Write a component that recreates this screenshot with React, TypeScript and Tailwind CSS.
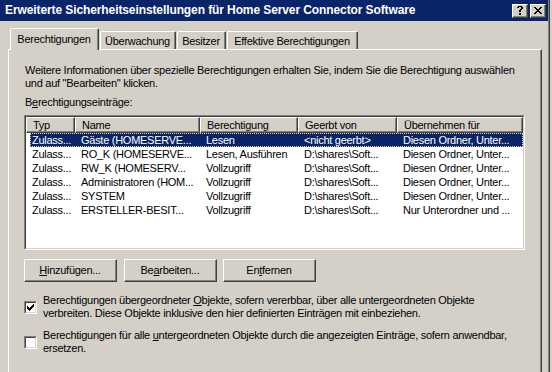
import React from "react";

const CHECK = [
  "......#",
  ".....##",
  "#...###",
  "##.###.",
  "#####..",
  ".###...",
  "..#....",
];
const CLOSE = [
  "##....##",
  ".##..##.",
  "..####..",
  "...##...",
  "..####..",
  ".##..##.",
  "##....##",
];
const QUESTION = [
  ".####.",
  "##..##",
  "....##",
  "...##.",
  "..##..",
  "..##..",
  "......",
  "..##..",
  "..##..",
];

function Pixels({ rows }: { rows: string[] }) {
  const w = rows[0].length;
  const h = rows.length;
  return (
    <svg width={w} height={h} viewBox={`0 0 ${w} ${h}`} shapeRendering="crispEdges" className="block">
      {rows.flatMap((r, y) =>
        r.split("").map((c, x) =>
          c === "#" ? <rect key={`${x}-${y}`} x={x} y={y} width={1} height={1} fill="#000" /> : null
        )
      )}
    </svg>
  );
}

function Raised({ className = "", innerClassName = "", children }: { className?: string; innerClassName?: string; children?: React.ReactNode }) {
  return (
    <div className={`border-t border-l border-t-white border-l-white border-r border-b border-r-[#404040] border-b-[#404040] ${className}`}>
      <div className={`h-full w-full border-r border-b border-r-[#808080] border-b-[#808080] ${innerClassName}`}>{children}</div>
    </div>
  );
}

function U({ children }: { children: React.ReactNode }) {
  return <span className="underline underline-offset-[1px]">{children}</span>;
}

function CheckBox({ checked }: { checked: boolean }) {
  return (
    <div className="w-[13px] h-[13px] shrink-0 border-t border-l border-t-[#808080] border-l-[#808080] border-b border-r border-b-white border-r-white">
      <div className="w-full h-full bg-white border-t border-l border-t-[#404040] border-l-[#404040] border-b border-r border-b-[#d4d0c8] border-r-[#d4d0c8] flex items-center justify-center">
        {checked && <Pixels rows={CHECK} />}
      </div>
    </div>
  );
}

const rows = [
  ["Zulass...", "Gäste (HOMESERVE...", "Lesen", "<nicht geerbt>", "Diesen Ordner, Unter..."],
  ["Zulass...", "RO_K (HOMESERVE...", "Lesen, Ausführen", "D:\\shares\\Soft...", "Diesen Ordner, Unter..."],
  ["Zulass...", "RW_K (HOMESERV...", "Vollzugriff", "D:\\shares\\Soft...", "Diesen Ordner, Unter..."],
  ["Zulass...", "Administratoren (HOM...", "Vollzugriff", "D:\\shares\\Soft...", "Diesen Ordner, Unter..."],
  ["Zulass...", "SYSTEM", "Vollzugriff", "D:\\shares\\Soft...", "Diesen Ordner, Unter..."],
  ["Zulass...", "ERSTELLER-BESIT...", "Vollzugriff", "D:\\shares\\Soft...", "Nur Unterordner und ..."],
];

const headers: [string, string][] = [
  ["Typ", "w-[49px]"],
  ["Name", "w-[125px]"],
  ["Berechtigung", "w-[98px]"],
  ["Geerbt von", "w-[99px]"],
  ["Übernehmen für", "w-[126px]"],
];

export default function App() {
  return (
    <div className="w-[552px] h-[372px] overflow-hidden bg-[#d4d0c8] font-['Liberation_Sans',Arial,sans-serif] text-[11px] leading-[13px] text-black tracking-[-0.27px] flex">
      <div className="w-[550px] h-full shrink-0 border-r border-r-[#404040]">
        <div className="h-full border-r border-r-[#808080] flex flex-col">
          {/* Title bar */}
          <div className="h-[21px] shrink-0 bg-[#0a246a] flex items-start pl-[5px] pr-[2px]">
            <div className="flex-1 pt-[4px] text-white font-bold text-[12px] leading-[13px] tracking-[-0.1px] whitespace-nowrap">
              Erweiterte Sicherheitseinstellungen für Home Server Connector Software
            </div>
            <Raised className="mt-[4px] w-[16px] h-[14px] bg-[#d4d0c8]" innerClassName="flex items-center justify-center">
              <Pixels rows={QUESTION} />
            </Raised>
            <Raised className="mt-[4px] ml-[2px] w-[16px] h-[14px] bg-[#d4d0c8]" innerClassName="flex items-center justify-center">
              <Pixels rows={CLOSE} />
            </Raised>
          </div>

          {/* Body */}
          <div className="flex-1 flex flex-col pl-[8px] pr-[6px] pt-[7px]">
            {/* Tabs */}
            <div className="h-[21px] shrink-0 flex items-end">
              <div className="relative z-10 ml-[2px] w-[89px] h-[22px] -mb-[1px] bg-[#d4d0c8] rounded-t-[2px] border-t border-l border-t-white border-l-white border-r border-r-[#404040]">
                <div className="h-full border-r border-r-[#808080] pt-[4px] text-center whitespace-nowrap">Berechtigungen</div>
              </div>
              <div className="ml-[1px] w-[76px] h-[18px] rounded-t-[2px] border-t border-l border-t-white border-l-white border-r border-r-[#404040]">
                <div className="h-full border-r border-r-[#808080] pt-[3px] text-center whitespace-nowrap">Überwachung</div>
              </div>
              <div className="ml-[1px] w-[49px] h-[18px] rounded-t-[2px] border-t border-l border-t-white border-l-white border-r border-r-[#404040]">
                <div className="h-full border-r border-r-[#808080] pt-[3px] text-center whitespace-nowrap">Besitzer</div>
              </div>
              <div className="ml-[1px] w-[131px] h-[18px] rounded-t-[2px] border-t border-l border-t-white border-l-white border-r border-r-[#404040]">
                <div className="h-full border-r border-r-[#808080] pt-[3px] text-center whitespace-nowrap">Effektive Berechtigungen</div>
              </div>
            </div>

            {/* Panel */}
            <div className="flex-1 border-t border-l border-t-white border-l-white border-r border-r-[#404040]">
              <div className="h-full border-r border-r-[#808080] pl-[15px] pt-[14px] flex flex-col">
                <div className="ml-[1px] whitespace-nowrap">
                  Weitere Informationen über spezielle Berechtigungen erhalten Sie, indem Sie die Berechtigung auswählen
                  <br />
                  und auf "Bearbeiten" klicken.
                </div>
                <div className="ml-[1px] mt-[6px] whitespace-nowrap">
                  B<U>e</U>rechtigungseinträge:
                </div>

                {/* List */}
                <div className="mt-[6px] w-[501px] h-[135px] shrink-0 border-t border-l border-t-[#808080] border-l-[#808080] border-b border-r border-b-white border-r-white">
                  <div className="w-full h-full bg-white border-t border-l border-t-[#404040] border-l-[#404040] border-b border-r border-b-[#d4d0c8] border-r-[#d4d0c8] overflow-hidden">
                    <div className="flex h-[16px]">
                      {headers.map(([h, w]) => (
                        <Raised key={h} className={`${w} h-[16px] shrink-0 bg-[#d4d0c8]`} innerClassName="pl-[6px] pt-[1px] whitespace-nowrap overflow-hidden">
                          {h}
                        </Raised>
                      ))}
                    </div>
                    {rows.map((r, i) => {
                      const sel = i === 0;
                      return (
                        <div key={i} className="flex h-[14px]">
                          <div className="w-[4px] shrink-0" />
                          <div
                            className={`flex-1 flex h-[14px] ${sel ? "bg-[#0a246a] text-white outline-1 outline-dotted outline-[#f0dc8c] -outline-offset-1" : ""}`}
                          >
                            <div className="w-[45px] shrink-0 pl-[2px] pt-[1px] whitespace-nowrap overflow-hidden">{r[0]}</div>
                            <div className="w-[125px] shrink-0 pl-[6px] pt-[1px] whitespace-nowrap overflow-hidden">{r[1]}</div>
                            <div className="w-[98px] shrink-0 pl-[6px] pt-[1px] whitespace-nowrap overflow-hidden">{r[2]}</div>
                            <div className="w-[99px] shrink-0 pl-[6px] pt-[1px] whitespace-nowrap overflow-hidden">{r[3]}</div>
                            <div className="flex-1 pl-[6px] pt-[1px] whitespace-nowrap overflow-hidden">{r[4]}</div>
                          </div>
                        </div>
                      );
                    })}
                  </div>
                </div>

                {/* Buttons */}
                <div className="mt-[9px] flex shrink-0">
                  <Raised className="w-[93px] h-[23px]" innerClassName="flex items-center justify-center whitespace-nowrap">
                    <span><U>H</U>inzufügen...</span>
                  </Raised>
                  <Raised className="ml-[7px] w-[93px] h-[23px]" innerClassName="flex items-center justify-center whitespace-nowrap">
                    <span>Be<U>a</U>rbeiten...</span>
                  </Raised>
                  <Raised className="ml-[6px] w-[93px] h-[23px]" innerClassName="flex items-center justify-center whitespace-nowrap">
                    <span>En<U>t</U>fernen</span>
                  </Raised>
                </div>

                {/* Checkbox 1 */}
                <div className="mt-[12px] flex items-center shrink-0">
                  <CheckBox checked />
                  <div className="ml-[6px] whitespace-nowrap">
                    Berechtigungen übergeordneter <U>O</U>bjekte, sofern vererbbar, über alle untergeordneten Objekte
                    <br />
                    verbreiten. Diese Objekte inklusive den hier definierten Einträgen mit einbeziehen.
                  </div>
                </div>

                {/* Checkbox 2 */}
                <div className="mt-[9px] flex items-center shrink-0">
                  <CheckBox checked={false} />
                  <div className="ml-[6px] whitespace-nowrap">
                    Berechtigungen für alle <U>u</U>ntergeordneten Objekte durch die angezeigten Einträge, sofern anwendbar,
                    <br />
                    ersetzen.
                  </div>
                </div>
              </div>
            </div>
          </div>
        </div>
      </div>
    </div>
  );
}
